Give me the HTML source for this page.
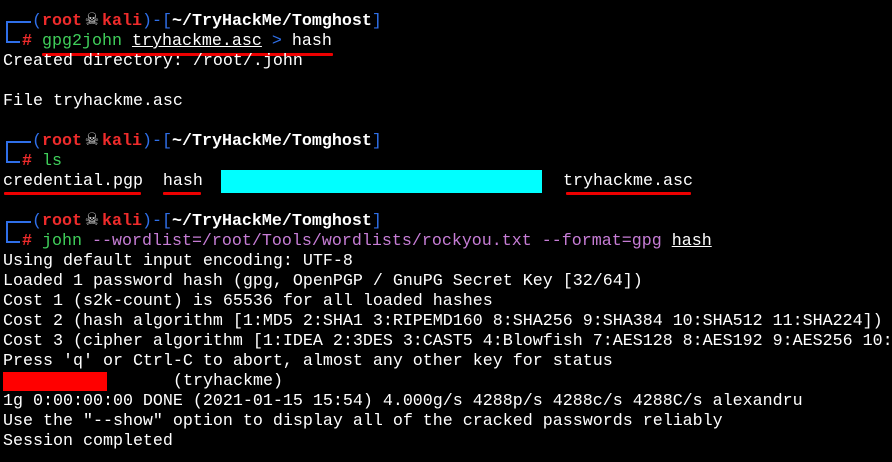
<!DOCTYPE html>
<html><head><meta charset="utf-8"><style>
html,body{margin:0;padding:0;background:#000;width:892px;height:462px;overflow:hidden}
body{position:relative;font-family:"Liberation Mono","DejaVu Sans Mono",monospace;font-size:16.67px;color:#fff}
.l{position:absolute;left:3px;height:20px;line-height:20px;white-space:pre;margin-top:2px}
.b{color:#2f6fe8}.r{color:#ee2b2b;font-weight:bold}.w{font-weight:bold;color:#fff}
.g{color:#3fcf5a}.p{color:#c77dd6}.u{text-decoration:underline}
.sk{display:inline-block;width:20px;text-align:center;font-size:21px;color:#ddd;line-height:18px;vertical-align:top}
.ru{position:absolute;background:#ee0000;height:3px;border-radius:1px}
</style></head><body>

<div style="position:absolute;left:6px;top:21px;width:2px;height:22px;background:#2f6fe8"></div>
<div style="position:absolute;left:6px;top:21px;width:25px;height:2px;background:#2f6fe8"></div>
<div style="position:absolute;left:6px;top:41px;width:14px;height:2px;background:#2f6fe8"></div>
<div class="l" style="top:10px;left:32px"><span class="b">(</span><span class="r">root</span><span class="sk">☠</span><span class="r">kali</span><span class="b">)-[</span><span class="w">~/TryHackMe/Tomghost</span><span class="b">]</span></div>
<div class="l" style="top:30px;left:22px"><span class="r">#</span> <span class="g">gpg2john</span> <span class="u">tryhackme.asc</span> <span class="b">&gt;</span> hash</div>
<div class="ru" style="left:42px;top:53px;width:291px"></div>
<div class="l" style="top:50px">Created directory: /root/.john</div>
<div class="l" style="top:90px">File tryhackme.asc</div>

<div style="position:absolute;left:6px;top:141px;width:2px;height:22px;background:#2f6fe8"></div>
<div style="position:absolute;left:6px;top:141px;width:25px;height:2px;background:#2f6fe8"></div>
<div style="position:absolute;left:6px;top:161px;width:14px;height:2px;background:#2f6fe8"></div>
<div class="l" style="top:130px;left:32px"><span class="b">(</span><span class="r">root</span><span class="sk">☠</span><span class="r">kali</span><span class="b">)-[</span><span class="w">~/TryHackMe/Tomghost</span><span class="b">]</span></div>
<div class="l" style="top:150px;left:22px"><span class="r">#</span> <span class="g">ls</span></div>
<div class="l" style="top:170px">credential.pgp  hash</div>
<div class="l" style="top:170px;left:563px">tryhackme.asc</div>
<div style="position:absolute;left:221px;top:170px;width:321px;height:23px;background:#00ffff"></div>
<div class="ru" style="left:4px;top:192px;width:137px"></div>
<div class="ru" style="left:163px;top:192px;width:38px"></div>
<div class="ru" style="left:566px;top:192px;width:125px"></div>

<div style="position:absolute;left:6px;top:221px;width:2px;height:22px;background:#2f6fe8"></div>
<div style="position:absolute;left:6px;top:221px;width:25px;height:2px;background:#2f6fe8"></div>
<div style="position:absolute;left:6px;top:241px;width:14px;height:2px;background:#2f6fe8"></div>
<div class="l" style="top:210px;left:32px"><span class="b">(</span><span class="r">root</span><span class="sk">☠</span><span class="r">kali</span><span class="b">)-[</span><span class="w">~/TryHackMe/Tomghost</span><span class="b">]</span></div>
<div class="l" style="top:230px;left:22px"><span class="r">#</span> <span class="g">john</span> <span class="p">--wordlist=/root/Tools/wordlists/rockyou.txt</span> <span class="p">--format=gpg</span> <span class="u">hash</span></div>
<div class="l" style="top:250px">Using default input encoding: UTF-8</div>
<div class="l" style="top:270px">Loaded 1 password hash (gpg, OpenPGP / GnuPG Secret Key [32/64])</div>
<div class="l" style="top:290px">Cost 1 (s2k-count) is 65536 for all loaded hashes</div>
<div class="l" style="top:310px">Cost 2 (hash algorithm [1:MD5 2:SHA1 3:RIPEMD160 8:SHA256 9:SHA384 10:SHA512 11:SHA224])</div>
<div class="l" style="top:330px">Cost 3 (cipher algorithm [1:IDEA 2:3DES 3:CAST5 4:Blowfish 7:AES128 8:AES192 9:AES256 10:</div>
<div class="l" style="top:350px">Press 'q' or Ctrl-C to abort, almost any other key for status</div>
<div style="position:absolute;left:3px;top:372px;width:104px;height:19px;background:#ff0000"></div>
<div class="l" style="top:370px;left:173px">(tryhackme)</div>
<div class="l" style="top:390px">1g 0:00:00:00 DONE (2021-01-15 15:54) 4.000g/s 4288p/s 4288c/s 4288C/s alexandru</div>
<div class="l" style="top:410px">Use the "--show" option to display all of the cracked passwords reliably</div>
<div class="l" style="top:430px">Session completed</div>
</body></html>
